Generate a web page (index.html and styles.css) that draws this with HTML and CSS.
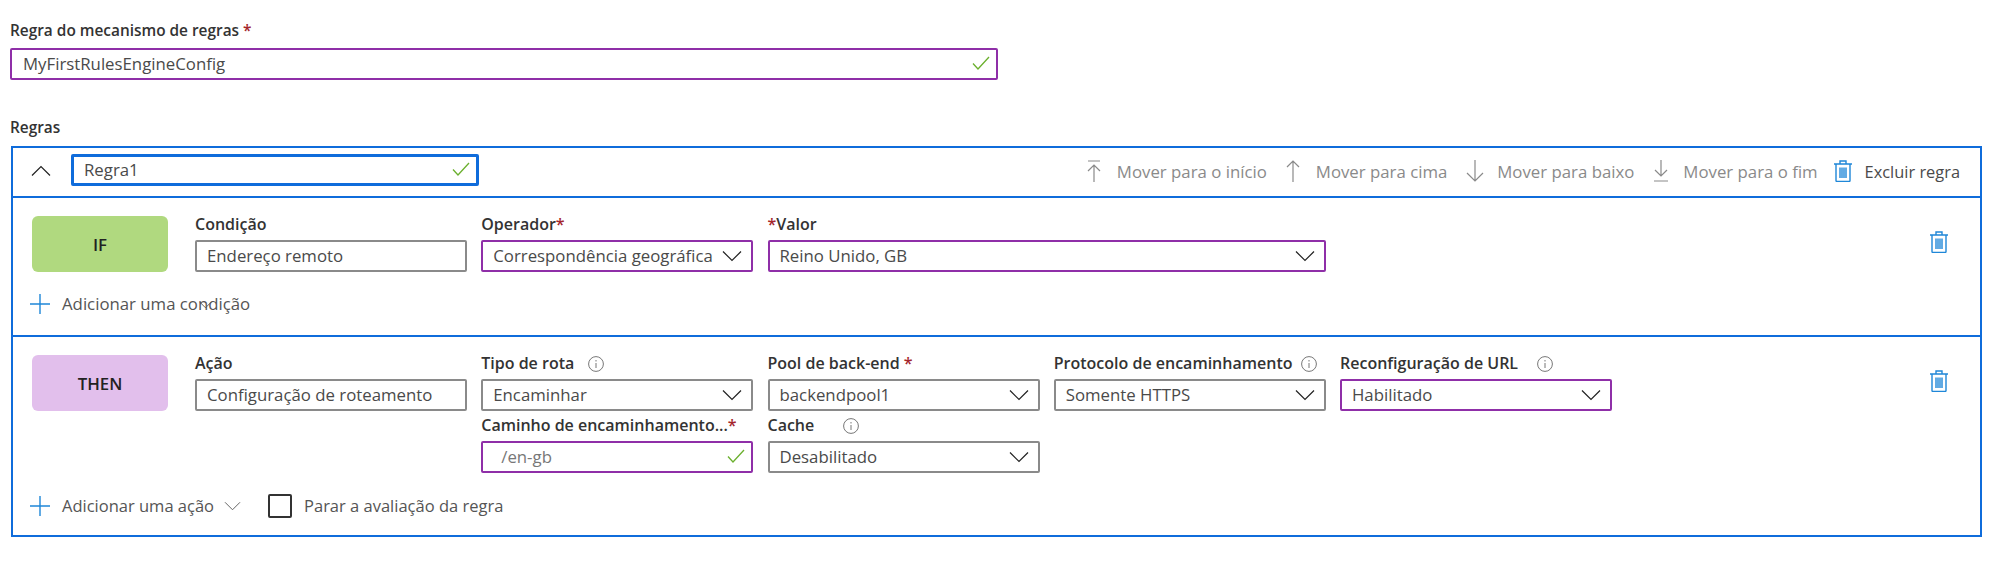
FILE: index.html
```html
<!DOCTYPE html>
<html lang="pt">
<head>
    <meta charset="UTF-8">
    <title>Regra do mecanismo de regras</title>
    <link rel="stylesheet" href="styles.css">
</head>
<body>
    <svg class="defs" width="0" height="0">
        <symbol id="chev" viewBox="0 0 20 12"><path d="M1 1.5 10 10.5 19 1.5" fill="none" stroke="currentColor" stroke-width="1.2"/></symbol>
        <symbol id="check" viewBox="0 0 18 14"><path d="M1 7.5 6 13 17 1" fill="none" stroke="#6bb02e" stroke-width="1.3"/></symbol>
        <symbol id="trash" viewBox="0 0 18 22"><path d="M0 4H18M6 4V1H12V4M2 4V20.5Q2 21.5 3 21.5H15Q16 21.5 16 20.5V4M6 7.5V18M8 7.5V18M10 7.5V18M12 7.5V18" fill="none" stroke="currentColor" stroke-width="1.4"/></symbol>
        <symbol id="info" viewBox="0 0 16 16"><circle cx="8" cy="8" r="7.4" fill="none" stroke="currentColor"/><path d="M8 7V12M8 4V5.5" stroke="currentColor"/></symbol>
        <symbol id="plus" viewBox="0 0 20 20"><path d="M0 10H20M10 0V20" stroke="currentColor" stroke-width="1.4"/></symbol>
    </svg>

    <div class="label top-label">Regra do mecanismo de regras <span class="req">*</span></div>
    <div class="box box-main purple">
        <span>MyFirstRulesEngineConfig</span>
        <svg class="ico-check"><use href="#check"/></svg>
    </div>

    <div class="label rules-label">Regras</div>

    <div class="rule">
        <div class="rule-head">
            <svg class="collapse" viewBox="0 0 20 12"><path d="M1 10.5 10 1.5 19 10.5" fill="none" stroke="#222" stroke-width="1.2"/></svg>
            <div class="box box-name">
                <span>Regra1</span>
                <svg class="ico-check"><use href="#check"/></svg>
            </div>
            <div class="tools">
                <div class="tool off tool-top">
                    <svg class="tool-ico" viewBox="0 0 20 22"><path d="M4 1H16M10 5V22M4 11 10 5 16 11" fill="none" stroke="currentColor" stroke-width="1.2"/></svg>
                    <span>Mover para o início</span>
                </div>
                <div class="tool off tool-up">
                    <svg class="tool-ico" viewBox="0 0 20 22"><path d="M10 1V22M4 7 10 1 16 7" fill="none" stroke="currentColor" stroke-width="1.2"/></svg>
                    <span>Mover para cima</span>
                </div>
                <div class="tool off tool-down">
                    <svg class="tool-ico" viewBox="0 0 20 22"><path d="M10 0V21M2 13 10 21 18 13" fill="none" stroke="currentColor" stroke-width="1.2"/></svg>
                    <span>Mover para baixo</span>
                </div>
                <div class="tool off tool-end">
                    <svg class="tool-ico" viewBox="0 0 20 22"><path d="M10 0V16M4 10 10 16 16 10M3 21H17" fill="none" stroke="currentColor" stroke-width="1.2"/></svg>
                    <span>Mover para o fim</span>
                </div>
                <div class="tool tool-delete">
                    <svg class="tool-ico trash-ico"><use href="#trash"/></svg>
                    <span>Excluir regra</span>
                </div>
            </div>
        </div>

        <div class="section section-if">
            <div class="section-main">
                <div class="badge badge-if">IF</div>
                <div class="fields">
                    <div class="field">
                        <div class="label">Condição</div>
                        <div class="box">Endereço remoto</div>
                    </div>
                    <div class="field">
                        <div class="label">Operador<span class="req">*</span></div>
                        <div class="box purple"><span>Correspondência geográfica</span><svg class="ico-chev"><use href="#chev"/></svg></div>
                    </div>
                    <div class="field span-2">
                        <div class="label"><span class="req">*</span>Valor</div>
                        <div class="box purple"><span>Reino Unido, GB</span><svg class="ico-chev"><use href="#chev"/></svg></div>
                    </div>
                </div>
                <svg class="row-trash"><use href="#trash"/></svg>
            </div>
            <div class="add-row add-if">
                <svg class="ico-plus"><use href="#plus"/></svg>
                <span class="add-text">Adicionar uma condição</span>
                <svg class="stray" viewBox="0 0 14 8"><path d="M1 1 7 7 13 1" fill="none" stroke="#555" stroke-width="1"/></svg>
            </div>
        </div>

        <div class="section">
            <div class="section-main">
                <div class="badge badge-then">THEN</div>
                <div class="fields">
                    <div class="field">
                        <div class="label">Ação</div>
                        <div class="box">Configuração de roteamento</div>
                    </div>
                    <div class="field">
                        <div class="label">Tipo de rota <svg class="ico-info"><use href="#info"/></svg></div>
                        <div class="box"><span>Encaminhar</span><svg class="ico-chev"><use href="#chev"/></svg></div>
                    </div>
                    <div class="field">
                        <div class="label">Pool de back-end <span class="req">*</span></div>
                        <div class="box"><span>backendpool1</span><svg class="ico-chev"><use href="#chev"/></svg></div>
                    </div>
                    <div class="field">
                        <div class="label">Protocolo de encaminhamento <svg class="ico-info info-tight"><use href="#info"/></svg></div>
                        <div class="box"><span>Somente HTTPS</span><svg class="ico-chev"><use href="#chev"/></svg></div>
                    </div>
                    <div class="field">
                        <div class="label">Reconfiguração de URL <svg class="ico-info info-wide"><use href="#info"/></svg></div>
                        <div class="box purple"><span>Habilitado</span><svg class="ico-chev"><use href="#chev"/></svg></div>
                    </div>
                    <div class="field col-2">
                        <div class="label">Caminho de encaminhamento...<span class="req">*</span></div>
                        <div class="box purple path"><span class="muted">/en-gb</span><svg class="ico-check"><use href="#check"/></svg></div>
                    </div>
                    <div class="field">
                        <div class="label">Cache <svg class="ico-info cache-info"><use href="#info"/></svg></div>
                        <div class="box"><span>Desabilitado</span><svg class="ico-chev"><use href="#chev"/></svg></div>
                    </div>
                </div>
                <svg class="row-trash"><use href="#trash"/></svg>
            </div>
            <div class="add-row add-then">
                <svg class="ico-plus"><use href="#plus"/></svg>
                <span class="add-text">Adicionar uma ação</span>
                <svg class="ico-chev small"><use href="#chev"/></svg>
                <span class="checkbox"></span>
                <span class="add-text">Parar a avaliação da regra</span>
            </div>
        </div>
    </div>
</body>
</html>
```

FILE: styles.css
```css
body {
    font-family: "Open Sans", Arial, sans-serif;
    font-size: 16.8px;
    color: #4a4a4a;
    background-color: #fff;
    margin: 0;
    padding: 17px 18px 0 10px;
}
.defs {
    position: absolute;
}
.label {
    height: 30px;
    line-height: 29px;
    font-size: 16px;
    font-weight: 600;
    color: #333;
    white-space: nowrap;
}
.req {
    color: #a4262c;
}
.top-label {
    height: 31px;
    line-height: 27px;
    font-size: 15.4px;
}
.rules-label {
    margin-top: 33px;
    height: 33px;
    line-height: 30px;
    font-size: 15.4px;
}
.box {
    display: flex;
    align-items: center;
    justify-content: space-between;
    box-sizing: border-box;
    height: 32px;
    padding: 0 10px 2px;
    border: 2px solid #8a8a8a;
    border-radius: 2px;
    white-space: nowrap;
}
.purple {
    border-color: #8f2fa8;
}
.box-main {
    width: 988px;
    padding-left: 11px;
}
.box-name {
    width: 408px;
    margin-bottom: 2px;
    border-color: #0f6cdb;
    border-width: 3px;
}
.path {
    padding-left: 18px;
}
.muted {
    color: #777;
}
.ico-check {
    width: 18px;
    height: 14px;
    margin-right: -4px;
}
.ico-chev {
    width: 20px;
    height: 12px;
    color: #222;
    margin: 2px -1px 0 0;
    flex-shrink: 0;
}
.ico-chev.small {
    width: 17px;
    height: 10px;
    color: #666;
    margin: 0 27px 0 10px;
}
.ico-info {
    width: 16px;
    height: 16px;
    margin-left: 10px;
    vertical-align: -3px;
    color: #777;
}
.info-tight {
    margin-left: 4px;
}
.info-wide {
    margin-left: 15px;
}
.cache-info {
    margin-left: 25px;
}
.rule {
    margin-left: 1px;
    border: 2px solid #0f6cdb;
}
.rule-head {
    display: flex;
    align-items: center;
    box-sizing: border-box;
    height: 48px;
    padding: 0 20px 2px 18px;
}
.collapse {
    width: 20px;
    height: 12px;
    margin-right: 20px;
}
.tools {
    display: flex;
    align-items: center;
    gap: 18px;
    margin-left: auto;
}
.tool {
    display: flex;
    align-items: center;
    gap: 12px;
}
.tool.off {
    color: #8a8a8a;
}
.tool-top {
    gap: 13px;
    margin-right: -2px;
}
.tool-up {
    gap: 13px;
}
.tool-down {
    gap: 12px;
    margin-right: -1px;
}
.tool-end {
    gap: 12px;
    margin-right: -3px;
}
.tool-delete {
    font-size: 16.4px;
}
.tool-ico {
    width: 20px;
    height: 22px;
}
.trash-ico {
    color: #1f87d8;
}
.section {
    border-top: 2px solid #0f6cdb;
    padding: 12px 0 17px 19px;
}
.section-if {
    padding-bottom: 19px;
}
.section-main {
    display: flex;
    align-items: flex-start;
}
.badge {
    display: flex;
    align-items: center;
    justify-content: center;
    width: 136px;
    height: 56px;
    margin: 6px 27px 0 0;
    border-radius: 6px;
    font-weight: 600;
    color: #222;
}
.badge-if {
    background-color: #b0d97f;
}
.badge-then {
    background-color: #e2bfec;
}
.fields {
    display: grid;
    grid-template-columns: repeat(5, 272px);
    column-gap: 14.25px;
}
.span-2 {
    grid-column: span 2;
}
.col-2 {
    grid-column: 2;
}
.row-trash {
    width: 18px;
    height: 22px;
    margin: 21px 32px 0 auto;
    color: #1f87d8;
}
.add-row {
    position: relative;
    display: flex;
    align-items: center;
    height: 24px;
    margin-left: -2px;
}
.add-if {
    margin-top: 20px;
}
.add-then {
    margin-top: 21px;
    font-size: 16.5px;
}
.ico-plus {
    width: 20px;
    height: 20px;
    color: #1f87d8;
    margin-right: 12px;
}
.add-text {
    padding-bottom: 2px;
    color: #555;
}
.checkbox {
    box-sizing: border-box;
    width: 24px;
    height: 24px;
    margin-right: 12px;
    border: 2px solid #333;
    border-radius: 2px;
}
.stray {
    position: absolute;
    left: 169px;
    top: 9px;
    width: 13px;
    height: 8px;
}
```
